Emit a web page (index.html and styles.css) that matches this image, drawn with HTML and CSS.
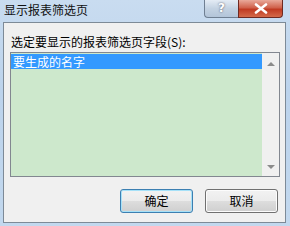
FILE: index.html
```html
<!DOCTYPE HTML>
<html lang="zh-CN">
<head>
	<meta charset="utf-8">
	<link rel="stylesheet" href="styles.css">
</head>
<body>
	<div class="window">
		<div class="titlebar">
			<span class="title">显示报表筛选页</span>
			<div class="caption">
				<span class="help">?</span>
				<span class="close">
					<svg width="14" height="11" viewBox="0 0 14 11"><path d="M2 1.5 L12 9.5 M12 1.5 L2 9.5" stroke="#fff" stroke-width="2.6" stroke-linecap="round"/></svg>
				</span>
			</div>
		</div>
		<div class="client">
			<div class="label">选定要显示的报表筛选页字段(<u>S</u>):</div>
			<div class="listbox">
				<div class="items">
					<div class="item on">要生成的名字</div>
				</div>
				<div class="scroll">
					<span class="arr up"></span>
					<span class="arr down"></span>
				</div>
			</div>
			<div class="buttons">
				<a href="javascript:;" class="btn default">确定</a>
				<a href="javascript:;" class="btn">取消</a>
			</div>
		</div>
	</div>
</body>
</html>
```

FILE: styles.css
```css
*{padding:0;margin:0;text-decoration:none;box-sizing:border-box;}
body{width:290px;height:226px;overflow:hidden;font-family:"Noto Sans CJK SC","DejaVu Sans",sans-serif;font-size:12px;color:#000;}
.window{width:290px;height:226px;background:linear-gradient(#c9dcf0,#bcd3ec 40%,#c2d8ee);display:flex;flex-direction:column;padding:0 4px 3px 3px;}
.titlebar{height:22px;display:flex;align-items:flex-start;}
.title{font-size:12px;line-height:20px;padding-left:1px;color:#111;}
.caption{margin-left:auto;display:flex;margin-right:3px;}
.help{width:34px;height:18px;border:1px solid #6f7f92;border-top:none;border-right:none;border-radius:0 0 0 4px;background:linear-gradient(#e4ecf5,#c3d2e2 50%,#b3c5d9);color:#fff;font-family:"DejaVu Sans",sans-serif;font-weight:bold;font-size:12px;line-height:16px;text-align:center;text-shadow:0 0 2px #445;}
.close{width:45px;height:18px;border:1px solid #6e2a22;border-top:none;border-radius:0 0 4px 0;background:linear-gradient(#e9a99a,#d0624c 45%,#c03a22 55%,#d46a4a);display:flex;align-items:center;justify-content:center;}
.client{flex:1;background:#f0f0f0;border:1px solid #7d8a97;display:flex;flex-direction:column;padding:0 5px 0 6px;}
.label{line-height:16px;margin-top:11px;padding-left:1px;}
.listbox{margin-top:2px;height:125px;border:1px solid #828790;display:flex;background:#cde8cc;}
.items{flex:1;padding:1px 0 0 0;}
.item{height:15px;line-height:15px;padding-left:2px;}
.item.on{background:#3399ff;color:#fff;}
.scroll{width:17px;background:#f0f0f0;display:flex;flex-direction:column;justify-content:space-between;align-items:center;padding:9px 0 7px;}
.arr{width:0;height:0;border-left:4px solid transparent;border-right:4px solid transparent;}
.arr.up{border-bottom:4px solid #8b8b8b;}
.arr.down{border-top:4px solid #8b8b8b;}
.buttons{display:flex;justify-content:flex-end;gap:12px;margin-top:12px;padding-right:2px;}
.btn{width:73px;height:24px;border:1px solid #707070;border-radius:3px;background:linear-gradient(#f2f2f2,#ebebeb 50%,#dddddd 51%,#cfcfcf);color:#000;text-align:center;line-height:22px;font-size:12px;box-shadow:inset 0 0 0 1px #fcfcfc;}
.btn.default{border-color:#3c7fb1;box-shadow:inset 0 0 0 1px #a6e1f8;}
```
